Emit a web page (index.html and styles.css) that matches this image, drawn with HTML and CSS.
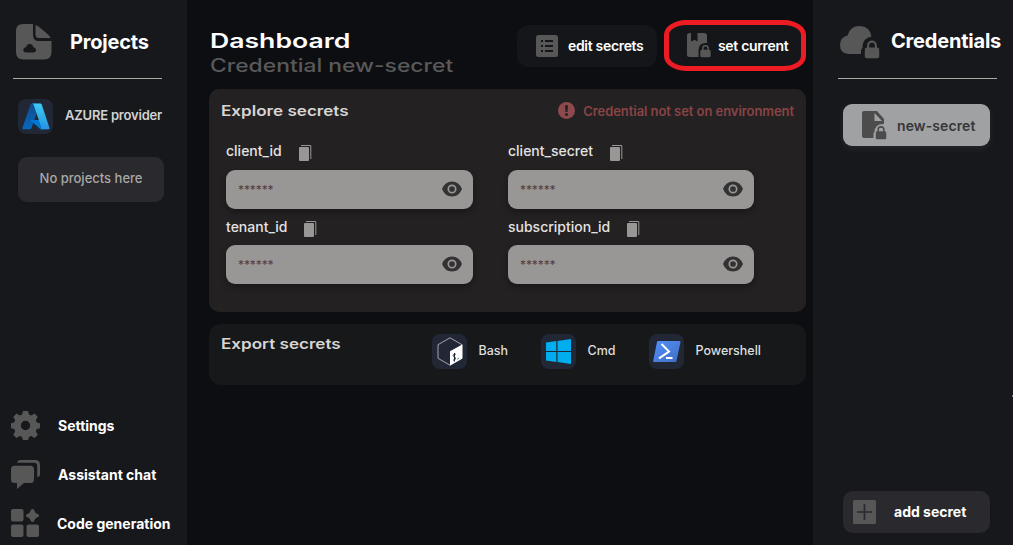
FILE: index.html
```html
<!DOCTYPE html>
<html lang="en">
<head>
<meta charset="utf-8">
<title>Dashboard</title>
<link rel="stylesheet" href="styles.css">
</head>
<body>
<svg class="defs" width="0" height="0">
  <defs>
    <symbol id="copy" viewBox="0 0 13 17"><rect x="0" y="2" width="10" height="14" rx="1"/><path d="M2 0h9a1.300 1.300 0 0 1 1.300 1.300V14h-1V1H2z"/></symbol>
    <symbol id="eye" viewBox="0 0 20 16"><path d="M0 8Q3 .5 10 .5T20 8Q17 15.500 10 15.500T0 8z"/><circle cx="10" cy="8" r="3.700" fill="none" stroke="#999795" stroke-width="1.700"/></symbol>
    <symbol id="lock" viewBox="0 0 12 15"><path fill-rule="evenodd" d="M2 6V4.500a4 4 0 0 1 8 0V6q2 0 2 2v5q0 2-2 2H2q-2 0-2-2V8q0-2 2-2zM3.700 6h4.600V4.500a2.300 2.300 0 0 0-4.600 0z"/></symbol>
  </defs>
</svg>
<div class="app">
  <aside class="sidebar">
    <header class="side-head">
      <svg width="36" height="36" viewBox="0 0 36 36" fill="#575757"><path fill-rule="evenodd" d="M7 0h10v11q0 6 6 6h12.500v11q0 7.500-7.500 7.500H7.500Q0 35.500 0 28V7Q0 0 7 0zM10.500 28.500h6.500q3 0 3-2.500 0-2.500-2.600-2.800Q16.500 20 13.700 20t-3.500 3.200Q7.300 23.500 7.300 26t3.200 2.500z"/><path d="M19.500 1Q22 1.500 25 4.500l7 6q2.500 2 2.500 3.500H23q-3.500 0-3.500-3.500z"/></svg>
      <h2>Projects</h2>
    </header>
    <div class="provider">
      <span class="tile"><svg width="28" height="27" viewBox="0 0 28 27"><defs><linearGradient id="azl" x1="0" y1="0" x2="0" y2="1"><stop stop-color="#114a8b"/><stop offset="1" stop-color="#0669bc"/></linearGradient><linearGradient id="azr" x1="0" y1="0" x2="0" y2="1"><stop stop-color="#3ccbf4"/><stop offset="1" stop-color="#2892df"/></linearGradient></defs><path fill="url(#azl)" d="M10 .5h8L9.500 25q-.5 1.300-1.800 1.300H1.500Q0 26.300.500 24.800L8.500 1.500Q8.900.5 10 .5z"/><path fill="#0078d4" d="M8 17h12l5 9.300h-6.500z"/><path fill="url(#azr)" d="M10.200.5h8q1.100 0 1.500 1L27.500 25q.4 1.300-1 1.300h-8q1.400-.2 1-1.600L11.500 1.500Q11.200.8 10.200.5z"/></svg></span>
      <span class="provider-name">AZURE provider</span>
    </div>
    <div class="empty">No projects here</div>
    <nav class="menu">
      <a class="menu-item"><svg width="29" height="29" viewBox="0 0 29 29" fill="#575757"><path fill-rule="evenodd" d="M12 0h5l1 3.600 2.300 1 3.300-2 3.200 3.300-2 3.200 1 2.500 3.200.7v4.900l-3.200.8-1 2.400 2 3.300-3.200 3.200-3.300-2-2.300 1L17 29h-5l-1-3.100-2.300-1-3.300 2-3.200-3.200 2-3.300-1-2.400L0 17.200v-4.900l3.200-.7 1-2.500-2-3.200 3.200-3.300 3.300 2 2.300-1zM14.500 9.800a4.700 4.700 0 1 0 0 9.400 4.700 4.700 0 0 0 0-9.400z"/></svg><span>Settings</span></a>
      <a class="menu-item"><svg width="29" height="29" viewBox="0 0 29 29" fill="#575757"><path d="M3.500 5.700h16q3.500 0 3.500 3.500v10.300q0 3.500-3.500 3.500H13l-7 6v-6H3.500Q0 23 0 19.500V9.200q0-3.500 3.500-3.500z"/><path d="M6 2.700Q6.500 0 9 0h15q5 0 5 5v9q0 3-2.800 3V6q0-3.300-3.200-3.300z"/></svg><span>Assistant chat</span></a>
      <a class="menu-item codegen"><svg width="29" height="29" viewBox="0 0 29 29" fill="#575757"><rect y="0" width="12.500" height="12.500" rx="2"/><rect y="15.500" width="12.500" height="12.500" rx="2"/><rect x="15.500" y="15.500" width="12.500" height="12.500" rx="2"/><path d="M21.500 0q1.300 0 1.700 1.200Q24 4 26.700 5q1.500.5 1.500 1.500t-1.500 1.500Q24 9 23.200 11.800 22.700 13 21.500 13t-1.700-1.200Q19 9 16.300 8q-1.500-.5-1.500-1.500T16.300 5Q19 4 19.800 1.200 20.200 0 21.500 0z"/></svg><span>Code generation</span></a>
    </nav>
  </aside>

  <main class="main">
    <header class="top">
      <div class="titles">
        <h1><span class="wide w-title">Dashboard</span></h1>
        <p><span class="wide w-sub">Credential new-secret</span></p>
      </div>
      <button class="btn edit"><svg width="22" height="22" viewBox="0 0 22 22"><rect width="22" height="22" rx="2.500" fill="#575757"/><path fill="#15161a" d="M5 5h2v2H5zM9 5h8v2H9zM5 10h2v2H5zM9 10h8v2H9zM5 15h2v2H5zM9 15h8v2H9z"/></svg><span>edit secrets</span></button>
      <button class="btn current"><svg width="24" height="25" viewBox="0 0 24 25" fill="#575757"><path d="M2.500 0H4v8.500l3.500-1.800 3 1.800V0H17q3 0 3 3v7q-8-1-8.500 7v7h-9Q0 24 0 21.500v-19Q0 0 2.500 0z"/><use href="#lock" x="13" y="11.500" width="11" height="13"/></svg><span>set current</span></button>
    </header>

    <section class="explore">
      <header class="explore-head">
        <h3><span class="wide w-explore">Explore secrets</span></h3>
        <div class="alert"><svg width="17" height="17" viewBox="0 0 17 17"><circle cx="8.500" cy="8.500" r="8.500" fill="#8c4a4c"/><path fill="#242122" d="M7 3.200h3L9.500 10h-2z"/><circle cx="8.500" cy="12.500" r="1.500" fill="#242122"/></svg><span>Credential not set on environment</span></div>
      </header>
      <div class="fields">
        <div class="field"><label>client_id<svg class="copy"><use href="#copy"/></svg></label><div class="secret"><span>******</span><svg class="eye"><use href="#eye"/></svg></div></div>
        <div class="field"><label>client_secret<svg class="copy"><use href="#copy"/></svg></label><div class="secret"><span>******</span><svg class="eye"><use href="#eye"/></svg></div></div>
        <div class="field"><label>tenant_id<svg class="copy"><use href="#copy"/></svg></label><div class="secret"><span>******</span><svg class="eye"><use href="#eye"/></svg></div></div>
        <div class="field"><label>subscription_id<svg class="copy"><use href="#copy"/></svg></label><div class="secret"><span>******</span><svg class="eye"><use href="#eye"/></svg></div></div>
      </div>
    </section>

    <section class="export">
      <h3><span class="wide w-export">Export secrets</span></h3>
      <div class="targets">
        <div class="target"><span class="tile"><svg width="26" height="29" viewBox="0 0 26 29"><path d="M13 .8L25 7.700V21.300L13 28.200 1 21.300V7.700z" fill="none" stroke="#c5c7cc" stroke-width=".8"/><path fill="#fff" d="M13 14.300L25.300 7.500v14L13 28.500z"/><path d="M18.800 17.200q-2.600-.4-2.600 1.200 0 1.200 1.300 1.600 1.300.5.900 1.900-.6 1.300-2.400 1.200M17.500 16v8.500" fill="none" stroke="#222736" stroke-width="1"/><path d="M20 22.300l2.300-1.300" stroke="#4da84a"/></svg></span><span>Bash</span></div>
        <div class="target"><span class="tile"><svg width="25" height="25" viewBox="0 0 25 25" fill="#00adef"><path d="M0 3.500l10.300-1.400v9.900H0zM11.500 2L25 0v12H11.500zM0 13h10.300v9.900L0 21.500zM11.500 13H25v12l-13.500-2z"/></svg></span><span>Cmd</span></div>
        <div class="target"><span class="tile"><svg width="28" height="21" viewBox="0 0 28 21"><defs><linearGradient id="ps" x1="0" y1="0" x2="1" y2="1"><stop stop-color="#5391fe"/><stop offset="1" stop-color="#3e6dbf"/></linearGradient></defs><path fill="url(#ps)" d="M5.200 0h21.500q1 0 .8 1L23.500 20q-.2 1-1.200 1H1Q0 21 .2 20L4 1q.2-1 1.200-1z"/><path d="M8.500 3l7.500 7.500L6 17.300M13 17h6.500" fill="none" stroke="#fff" stroke-width="2"/></svg></span><span>Powershell</span></div>
      </div>
    </section>
  </main>

  <aside class="credentials">
    <header class="side-head">
      <svg width="40" height="33" viewBox="0 0 40 33" fill="#575757"><path d="M9 28Q0 27.500 0 19q0-8 7.500-9.500Q10 0 19.500 0 30 .5 31.500 10.500 23 12 22.500 20v2q-1.500 1-1.500 3v3z"/><use href="#lock" x="24.500" y="14" width="15" height="18.500"/></svg>
      <h2>Credentials</h2>
    </header>
    <div class="credential"><svg width="25" height="29" viewBox="0 0 25 29" fill="#4c4c4d"><path fill-rule="evenodd" d="M2 0h13l7 8v5q-9-.5-9.500 8l-1 1v5H2q-2 0-2-2V2Q0 0 2 0zM12.500 2v8h7.500z"/><use href="#lock" x="13.500" y="14.500" width="11" height="14"/></svg><span>new-secret</span></div>
    <button class="add"><svg width="23" height="24" viewBox="0 0 23 24"><rect width="23" height="24" rx="1.500" fill="#575757"/><path d="M11.500 4v16M4 12h15" stroke="#2a292d" stroke-width="1.700"/></svg><span>add secret</span></button>
    <i class="edge-mark"></i>
  </aside>
</div>
</body>
</html>
```

FILE: styles.css
```css
* { box-sizing: border-box; }
body { margin: 0; background: #0d0e12; color: #fff; font-family: Inter, "Liberation Sans", sans-serif; overflow: hidden; }
h1, h2, h3, p { margin: 0; }
button { border: 0; font: inherit; color: inherit; text-align: left; }
svg { display: block; flex: none; }
.defs { position: absolute; }
span { white-space: nowrap; }
.app { display: grid; grid-template-columns: 187px 626px 200px; height: 545px; }

.sidebar, .credentials { background: #17181c; display: flex; flex-direction: column; }
.side-head { height: 79px; border-bottom: 1px solid #aaa9a5; display: flex; align-items: center; flex: none; }
.side-head h2 { font-size: 20px; line-height: 24px; font-weight: 700; letter-spacing: -.2px; }
.sidebar .side-head { margin: 0 25px 0 13px; padding: 5px 0 0 3px; gap: 18px; }
.tile { width: 35px; height: 35px; border-radius: 8px; background: #222736; display: flex; align-items: center; justify-content: center; flex: none; }
.provider { display: flex; align-items: center; margin: 20px 0 0 18px; gap: 12px; height: 35px; }
.provider-name { font-size: 13px; font-weight: 600; color: #d2d2d2; letter-spacing: -.2px; padding-bottom: 3px; }
.empty { margin: 23px 0 0 18px; width: 146px; height: 45px; border-radius: 9px; background: #2a292d; padding-bottom: 3px; display: flex; align-items: center; justify-content: center; font-size: 13px; font-weight: 500; color: #a9a8a8; }
.menu { margin: auto 0 7px 11px; display: flex; flex-direction: column; gap: 20px; }
.menu-item { display: flex; align-items: center; gap: 18px; height: 29px; font-size: 14px; font-weight: 700; }
.codegen { gap: 17px; }

.main { padding: 20px 7px 0 22px; }
.top { display: flex; height: 69px; }
.titles { width: 308px; padding-left: 1px; flex: none; }
.wide { display: inline-block; transform-origin: 0 50%; }
h1 { font-size: 20px; line-height: 26px; padding-top: 8px; font-weight: 600; }
.titles p { font-size: 18px; line-height: 22px; margin-top: 1px; color: #595959; font-weight: 500; }
.w-title { transform: scaleX(1.33); }
.w-sub { transform: scaleX(1.27); }
.w-explore, .w-export { transform: scaleX(1.22); }
.btn { display: flex; align-items: center; font-size: 14px; font-weight: 600; letter-spacing: -.32px; background: #15161a; flex: none; }
.btn span { padding-bottom: 1px; }
.edit { width: 140px; height: 42px; margin: 5px 7px 0 0; border-radius: 12px; padding: 0 0 0 19px; gap: 10px; }
.current { width: 142px; height: 51px; border: 5px solid #ed1c24; border-radius: 22px / 15px; padding: 0 0 0 18px; gap: 7px; }
.explore { height: 223px; border-radius: 10px; background: #242122; }
.explore-head { height: 43px; display: flex; justify-content: space-between; align-items: center; padding: 0 12px 0 12px; }
h3 { font-size: 14px; line-height: 20px; font-weight: 600; color: #d7d6d5; }
.alert { display: flex; align-items: center; gap: 8px; color: #884446; font-size: 13px; font-weight: 600; letter-spacing: -.06px; }
.fields { display: grid; grid-template-columns: 247px 246px; column-gap: 35px; row-gap: 0; padding: 6px 0 0 17px; }
.field { height: 75px; padding-bottom: 4px; }
label { display: flex; align-items: center; height: 32px; padding-bottom: 7px; font-size: 14px; font-weight: 500; gap: 17px; color: #e3e3e2; }
.field:nth-child(n+3) label { padding-bottom: 5px; }
.copy { width: 13px; height: 17px; fill: #999795; margin-top: 5px; }
.secret { height: 39px; border-radius: 9px; background: #999795; box-shadow: 0 3px 6px #0005; display: flex; justify-content: space-between; align-items: center; padding: 0 11.500px 1px 12px; color: #4b4146; font-size: 12px; }
.secret span { letter-spacing: -.1px; }
.eye { width: 20px; height: 16px; fill: #333233; }
.export { margin-top: 12px; height: 61px; border-radius: 12px; background: #17181a; display: flex; padding: 10px 0 0 12px; }
.export h3 { width: 211px; flex: none; }
.targets { display: flex; }
.target { display: flex; align-items: center; gap: 11.500px; height: 35px; width: 109px; font-size: 12.500px; font-weight: 500; color: #dedede; }
.target span:last-child { padding-bottom: 2px; }
.target + .target + .target { width: 115px; margin-left: -1px; }

.credentials { position: relative; }
.credentials .side-head { margin: 0 16px 0 25px; padding: 6px 0 0 2px; gap: 11px; }
.credentials .side-head h2 { padding-bottom: 2px; white-space: nowrap; }
.credential { margin: 25px 0 0 30px; width: 147px; height: 42px; border-radius: 9px; background: #a0a1a3; box-shadow: 0 3px 7px #fff1; display: flex; align-items: center; gap: 10px; padding: 1px 0 0 19px; color: #363638; font-size: 14px; font-weight: 600; letter-spacing: .1px; }
.add { margin: auto 0 12px 30px; width: 147px; height: 42px; border-radius: 10px; background: #2a292d; display: flex; align-items: center; gap: 18px; padding: 0 0 0 10px; font-size: 14px; font-weight: 700; }
.add span { padding-bottom: 2px; }
.edge-mark { position: absolute; right: 0; top: 395px; width: 1px; height: 2px; background: #777; }
```
